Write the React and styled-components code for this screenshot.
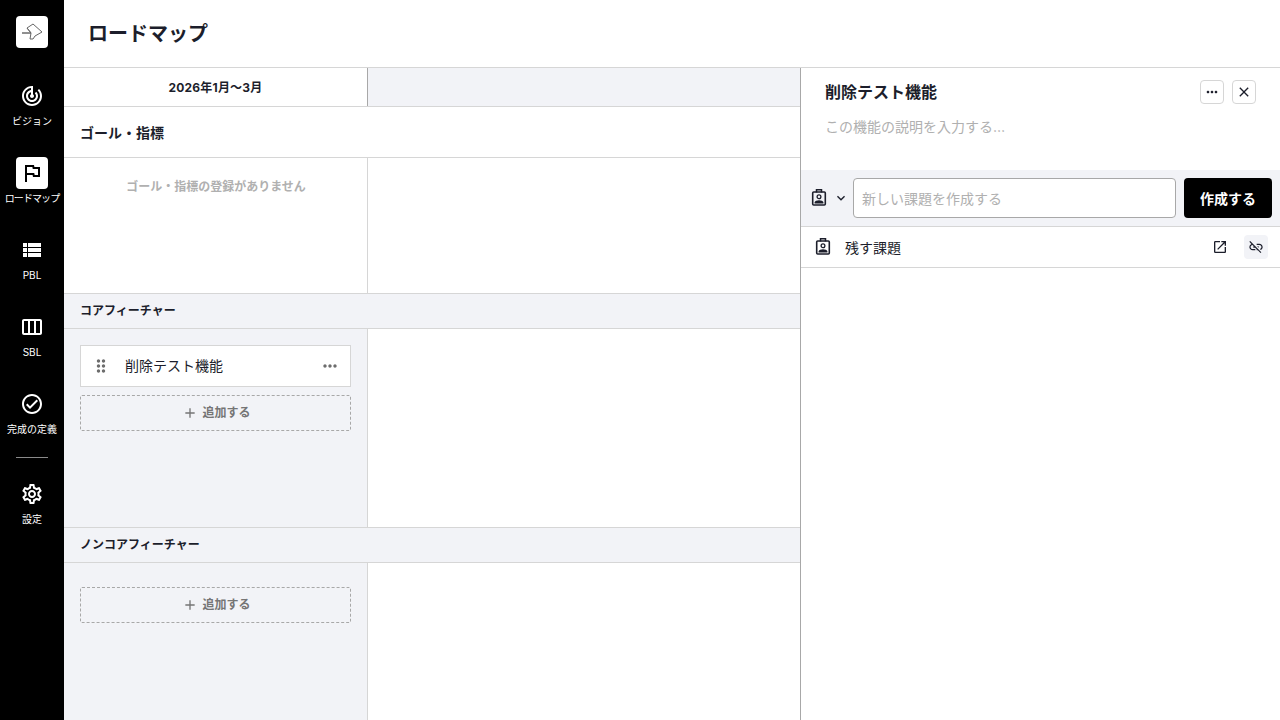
import React from "react";
import styled, { createGlobalStyle } from "styled-components";
import {
  MdAdd,
  MdClose,
  MdDragIndicator,
  MdKeyboardArrowDown,
  MdLinkOff,
  MdMoreHoriz,
  MdOpenInNew,
  MdOutlineCheckCircle,
  MdOutlineFlag,
  MdOutlineSettings,
  MdOutlineViewWeek,
  MdTrackChanges,
  MdViewList,
} from "react-icons/md";

const GlobalStyle = createGlobalStyle`
  html, body {
    margin: 0;
    height: 100%;
    overflow: hidden;
  }
  body {
    font-family: Inter, "Noto Sans CJK JP", sans-serif;
    color: #1c1e2b;
  }
  * {
    box-sizing: border-box;
  }
`;

const Page = styled.div`
  display: flex;
  width: 1280px;
  height: 720px;
  overflow: hidden;
`;

const Sidebar = styled.nav`
  flex: 0 0 64px;
  display: flex;
  flex-direction: column;
  align-items: center;
  padding-top: 16px;
  background: #000;
`;

const LogoBox = styled.div`
  display: flex;
  align-items: center;
  justify-content: center;
  width: 32px;
  height: 32px;
  margin-bottom: 32px;
  background: #fff;
  border-radius: 4px;
`;

const NavItem = styled.div`
  flex: none;
  display: flex;
  flex-direction: column;
  align-items: center;
  width: 64px;
  height: 77px;
  color: #fff;
`;

const NavIcon = styled.div`
  display: flex;
  align-items: center;
  justify-content: center;
  width: 32px;
  height: 32px;
  border-radius: 4px;
  background: ${(p) => (p.$active ? "#fff" : "transparent")};
  color: ${(p) => (p.$active ? "#000" : "#fff")};
`;

const NavLabel = styled.span`
  margin-top: 2px;
  font-size: 10px;
  line-height: 14px;
  white-space: nowrap;
  letter-spacing: ${(p) => (p.$tight ? "-0.9px" : "0")};
`;

const NavRule = styled.div`
  flex: none;
  width: 32px;
  height: 1px;
  margin: -8px 0 20px;
  background: #8a8a8a;
`;

const Main = styled.div`
  flex: 1;
  display: flex;
  flex-direction: column;
  min-width: 0;
`;

const Header = styled.header`
  flex: 0 0 68px;
  display: flex;
  align-items: center;
  padding: 0 24px;
  border-bottom: 1px solid #d6d6d6;
`;

const Title = styled.h1`
  margin: 0;
  font-size: 20px;
  font-weight: 700;
  line-height: 30px;
`;

const Body = styled.div`
  flex: 1;
  display: flex;
  min-height: 0;
`;

const Board = styled.div`
  flex: 0 0 736px;
  display: flex;
  flex-direction: column;
  min-width: 0;
`;

const Row = styled.div`
  display: grid;
  grid-template-columns: 304px 1fr;
  flex: ${(p) => (p.$fill ? "1" : `0 0 ${p.$h}px`)};
  border-bottom: ${(p) => (p.$fill ? "none" : "1px solid #d6d6d6")};
`;

const PeriodCell = styled.div`
  display: flex;
  align-items: center;
  justify-content: center;
  padding-bottom: 2px;
  border-right: 1px solid #a8a8a8;
  font-size: 12px;
  font-weight: 700;
  letter-spacing: 0.2px;
`;

const GreyCell = styled.div`
  background: #f2f3f7;
`;

const GoalHeading = styled.div`
  flex: 0 0 51px;
  display: flex;
  align-items: center;
  padding-left: 16px;
  border-bottom: 1px solid #d6d6d6;
  font-size: 14px;
  font-weight: 700;
`;

const EmptyCell = styled.div`
  padding: 20px 0 0 1px;
  border-right: 1px solid #d6d6d6;
  color: #b0b0b0;
  font-size: 12px;
  font-weight: 700;
  line-height: 17px;
  text-align: center;
`;

const EmptyRest = styled.div``;

const SectionHeading = styled.div`
  flex: 0 0 35px;
  display: flex;
  align-items: center;
  padding: 0 0 4px 16px;
  background: #f2f3f7;
  border-bottom: 1px solid #d6d6d6;
  font-size: 12px;
  font-weight: 700;
`;

const CardColumn = styled.div`
  display: flex;
  flex-direction: column;
  gap: 8px;
  padding: ${(p) => p.$top || 16}px 16px 16px;
  background: #f2f3f7;
  border-right: 1px solid #d6d6d6;
`;

const FeatureCard = styled.div`
  display: flex;
  align-items: center;
  height: 42px;
  padding: 0 10px;
  background: #fff;
  border: 1px solid #d6d6d6;
  font-size: 14px;
`;

const Grip = styled(MdDragIndicator)`
  flex: none;
  color: #6d6d6d;
`;

const CardName = styled.span`
  flex: 1;
  margin: 0 0 2px 14px;
`;

const CardMenu = styled(MdMoreHoriz)`
  flex: none;
  color: #6d6d6d;
`;

const AddButton = styled.button`
  display: flex;
  align-items: center;
  justify-content: center;
  gap: 4px;
  height: 36px;
  padding: 0 0 4px 2px;
  background: transparent;
  border: 1px dashed #a8a8a8;
  border-radius: 2px;
  color: #757575;
  font: 700 12px Inter, "Noto Sans CJK JP", sans-serif;
`;

const AddIcon = styled(MdAdd)`
  margin-top: 4px;
`;

const Detail = styled.aside`
  flex: 1;
  display: flex;
  flex-direction: column;
  min-width: 0;
  border-left: 1px solid #a8a8a8;
`;

const DetailHead = styled.div`
  flex: 0 0 102px;
  position: relative;
  padding: 12px 24px 0;
`;

const DetailTitle = styled.h2`
  margin: 0;
  font-size: 16px;
  font-weight: 700;
  line-height: 24px;
`;

const DetailDescription = styled.p`
  margin: 13px 0 0;
  color: #b0b0b0;
  font-size: 14px;
  line-height: 20px;
`;

const HeadActions = styled.div`
  position: absolute;
  top: 12px;
  right: 24px;
  display: flex;
  gap: 8px;
`;

const SmallButton = styled.button`
  display: flex;
  align-items: center;
  justify-content: center;
  width: 24px;
  height: 24px;
  padding: 0;
  background: #fff;
  border: 1px solid #d6d6d6;
  border-radius: 4px;
  color: #1c1e2b;
`;

const CreateBar = styled.div`
  flex: 0 0 57px;
  display: flex;
  align-items: center;
  padding: 0 8px;
  background: #f2f3f7;
  border-bottom: 1px solid #d6d6d6;
`;

const TypePicker = styled.div`
  display: flex;
  align-items: center;
  gap: 4px;
  width: 44px;
  color: #1c1e2b;
`;

const CreateInput = styled.input`
  flex: 1;
  min-width: 0;
  height: 40px;
  padding: 0 8px;
  background: #fff;
  border: 1px solid #a8a8a8;
  border-radius: 4px;
  font: 14px Inter, "Noto Sans CJK JP", sans-serif;
  &::placeholder {
    color: #b0b0b0;
    opacity: 1;
  }
`;

const CreateButton = styled.button`
  flex: 0 0 88px;
  height: 40px;
  margin-left: 8px;
  padding: 0;
  background: #000;
  border: none;
  border-radius: 4px;
  color: #fff;
  font: 700 14px Inter, "Noto Sans CJK JP", sans-serif;
`;

const IssueRow = styled.div`
  flex: 0 0 41px;
  display: flex;
  align-items: center;
  padding: 0 12px;
  border-bottom: 1px solid #d6d6d6;
  font-size: 14px;
`;

const IssueName = styled.span`
  flex: 1;
  margin-left: 12px;
`;

const IconWell = styled.div`
  display: flex;
  align-items: center;
  justify-content: center;
  width: 24px;
  height: 24px;
  margin-left: ${(p) => p.$gap || 0}px;
  border-radius: 4px;
  background: ${(p) => (p.$filled ? "#f2f3f7" : "transparent")};
`;

const LogoMark = () => (
  <svg width="32" height="32" viewBox="0 0 32 32" fill="none" strokeWidth="1">
    <path d="M6 17h9" stroke="#222" />
    <path d="M11 12l6-4 9 8-7 4-2 3h-3l1-6zM11 12l4 5" stroke="#666" />
  </svg>
);

const BadgeIcon = () => (
  <svg width="20" height="20" viewBox="0 0 20 20" fill="none">
    <rect x="3.7" y="4" width="12.6" height="13" rx="1" stroke="currentColor" strokeWidth="1.6" />
    <path d="M7.5 4.5V1.8h5v2.7" stroke="currentColor" strokeWidth="1.5" />
    <circle cx="10" cy="8.8" r="1.9" stroke="currentColor" strokeWidth="1.3" />
    <path d="M5.6 15.5v-1c0-1.4 2.6-2.2 4.4-2.2s4.4.8 4.4 2.2v1z" fill="currentColor" />
  </svg>
);

const navItems = [
  { label: "ビジョン", icon: <MdTrackChanges size={24} /> },
  { label: "ロードマップ", icon: <MdOutlineFlag size={24} />, active: true, tight: true },
  { label: "PBL", icon: <MdViewList size={24} /> },
  { label: "SBL", icon: <MdOutlineViewWeek size={24} /> },
  { label: "完成の定義", icon: <MdOutlineCheckCircle size={24} /> },
];

export default function App() {
  return (
    <>
      <GlobalStyle />
      <Page>
        <Sidebar>
          <LogoBox>
            <LogoMark />
          </LogoBox>
          {navItems.map((item) => (
            <NavItem key={item.label}>
              <NavIcon $active={item.active}>{item.icon}</NavIcon>
              <NavLabel $tight={item.tight}>{item.label}</NavLabel>
            </NavItem>
          ))}
          <NavRule />
          <NavItem>
            <NavIcon>
              <MdOutlineSettings size={24} />
            </NavIcon>
            <NavLabel>設定</NavLabel>
          </NavItem>
        </Sidebar>
        <Main>
          <Header>
            <Title>ロードマップ</Title>
          </Header>
          <Body>
            <Board>
              <Row $h={39}>
                <PeriodCell>2026年1月〜3月</PeriodCell>
                <GreyCell />
              </Row>
              <GoalHeading>ゴール・指標</GoalHeading>
              <Row $h={136}>
                <EmptyCell>ゴール・指標の登録がありません</EmptyCell>
                <EmptyRest />
              </Row>
              <SectionHeading>コアフィーチャー</SectionHeading>
              <Row $h={199}>
                <CardColumn>
                  <FeatureCard>
                    <Grip size={20} />
                    <CardName>削除テスト機能</CardName>
                    <CardMenu size={20} />
                  </FeatureCard>
                  <AddButton>
                    <AddIcon size={16} />
                    追加する
                  </AddButton>
                </CardColumn>
                <EmptyRest />
              </Row>
              <SectionHeading>ノンコアフィーチャー</SectionHeading>
              <Row $fill>
                <CardColumn $top={24}>
                  <AddButton>
                    <AddIcon size={16} />
                    追加する
                  </AddButton>
                </CardColumn>
                <EmptyRest />
              </Row>
            </Board>
            <Detail>
              <DetailHead>
                <DetailTitle>削除テスト機能</DetailTitle>
                <DetailDescription>この機能の説明を入力する…</DetailDescription>
                <HeadActions>
                  <SmallButton>
                    <MdMoreHoriz size={16} />
                  </SmallButton>
                  <SmallButton>
                    <MdClose size={16} />
                  </SmallButton>
                </HeadActions>
              </DetailHead>
              <CreateBar>
                <TypePicker>
                  <BadgeIcon />
                  <MdKeyboardArrowDown size={16} />
                </TypePicker>
                <CreateInput placeholder="新しい課題を作成する" />
                <CreateButton>作成する</CreateButton>
              </CreateBar>
              <IssueRow>
                <BadgeIcon />
                <IssueName>残す課題</IssueName>
                <IconWell>
                  <MdOpenInNew size={16} />
                </IconWell>
                <IconWell $filled $gap={12}>
                  <MdLinkOff size={16} />
                </IconWell>
              </IssueRow>
            </Detail>
          </Body>
        </Main>
      </Page>
    </>
  );
}
